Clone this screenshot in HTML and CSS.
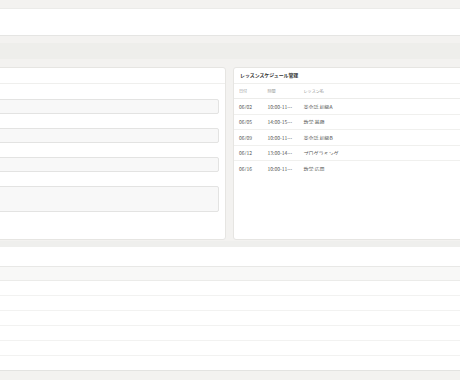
FILE: index.html
```html
<!DOCTYPE html>
<html lang="ja">
<head>
<meta charset="utf-8">
<title>レッスンスケジュール管理</title>
<link rel="stylesheet" href="styles.css">
</head>
<body>
<div class="viewport">
<div class="canvas">
  <header class="topbar"></header>
  <div class="toolbar"></div>
  <div class="cards">
    <section class="card">
      <div class="card-head"></div>
      <form class="form-body">
        <div class="field"><input class="input" type="text"></div>
        <div class="field"><input class="input" type="text"></div>
        <div class="field"><input class="input" type="text"></div>
        <div class="field"><textarea class="textarea"></textarea></div>
      </form>
    </section>
    <section class="card">
      <div class="card-head"><h2 class="card-title">レッスンスケジュール管理</h2></div>
      <div class="schedule">
        <div class="row row-head"><span>日付</span><span>時間</span><span>レッスン名</span></div>
        <div class="row"><span>06/02</span><span class="time">10:00-11:00</span><span>英会話 初級A</span></div>
        <div class="row"><span>06/05</span><span class="time">14:00-15:00</span><span>数学 基礎</span></div>
        <div class="row"><span>06/09</span><span class="time">10:00-11:00</span><span>英会話 初級B</span></div>
        <div class="row"><span>06/12</span><span class="time">13:00-14:00</span><span>プログラミング</span></div>
        <div class="row"><span>06/16</span><span class="time">10:00-11:00</span><span>数学 応用</span></div>
      </div>
    </section>
  </div>
  <div class="list">
    <div class="list-band"></div>
    <div class="list-head"></div>
    <div class="list-thead"></div>
    <div class="list-row"></div>
    <div class="list-row"></div>
    <div class="list-row"></div>
    <div class="list-row"></div>
    <div class="list-row"></div>
    <div class="list-row list-row-last"></div>
  </div>
</div>
</div>
</body>
</html>
```
FILE: styles.css
```css
html, body {
  margin: 0;
  padding: 0;
}
body {
  background: #f3f2f0;
  font-family: "Noto Sans CJK JP", "Noto Sans", sans-serif;
}
.viewport {
  width: 460px;
  height: 380px;
  overflow: hidden;
}
.canvas {
  margin-left: -234px;
  width: 927px;
}
.topbar {
  margin-top: 8px;
  height: 26px;
  background: #fff;
  border-top: 1px solid #ebebe9;
  border-bottom: 1px solid #e5e5e3;
}
.toolbar {
  margin-top: 7px;
  height: 16px;
  background: #eeeeeb;
}
.cards {
  display: grid;
  grid-template-columns: 460px 460px;
  gap: 7px;
  margin-top: 8px;
}
.card {
  background: #fff;
  border: 1px solid #e6e5e2;
  border-radius: 3px;
}
.card-head {
  height: 15px;
  border-bottom: 1px solid #efefed;
  padding: 0 6px;
  display: flex;
  align-items: center;
}
.card-title {
  margin: 0;
  font-size: 4.9px;
  font-weight: 700;
  color: #333;
  line-height: 1;
}
.form-body {
  margin: 0;
  padding: 1px 6px 27px 7px;
  display: flex;
  flex-direction: column;
}
.field {
  padding-top: 14px;
}
.input, .textarea {
  display: block;
  box-sizing: border-box;
  width: 100%;
  margin: 0;
  padding: 0;
  border: 1px solid #e3e3e2;
  border-radius: 2px;
  background: #f8f8f8;
  appearance: none;
  resize: none;
  outline: none;
  font: inherit;
}
.input { height: 15px; }
.textarea { height: 26px; }
.schedule {
  display: flex;
  flex-direction: column;
}
.row {
  display: grid;
  grid-template-columns: 28.5px 36px 1fr;
  align-items: center;
  height: 14.5px;
  border-bottom: 1px solid #f0f0ee;
  font-size: 5px;
  color: #555;
  line-height: 1;
}
.row:last-child { border-bottom: none; }
.row span {
  padding: 0 5px;
  white-space: nowrap;
  overflow: hidden;
  text-overflow: ellipsis;
}
.row-head {
  height: 14px;
  font-size: 4.1px;
  color: #999;
  border-bottom-color: #ececea;
}
.list {
  margin-top: 1px;
}
.list-band {
  height: 6px;
  background: #efefed;
}
.list-head {
  height: 19px;
  background: #fff;
  border-bottom: 1px solid #e8e8e6;
}
.list-thead {
  height: 13px;
  background: #f8f8f7;
  border-bottom: 1px solid #ebebe9;
}
.list-row {
  height: 14px;
  background: #fff;
  border-bottom: 1px solid #f2f2f1;
}
.list-row-last {
  border-bottom-color: #e3e3e1;
}
```
